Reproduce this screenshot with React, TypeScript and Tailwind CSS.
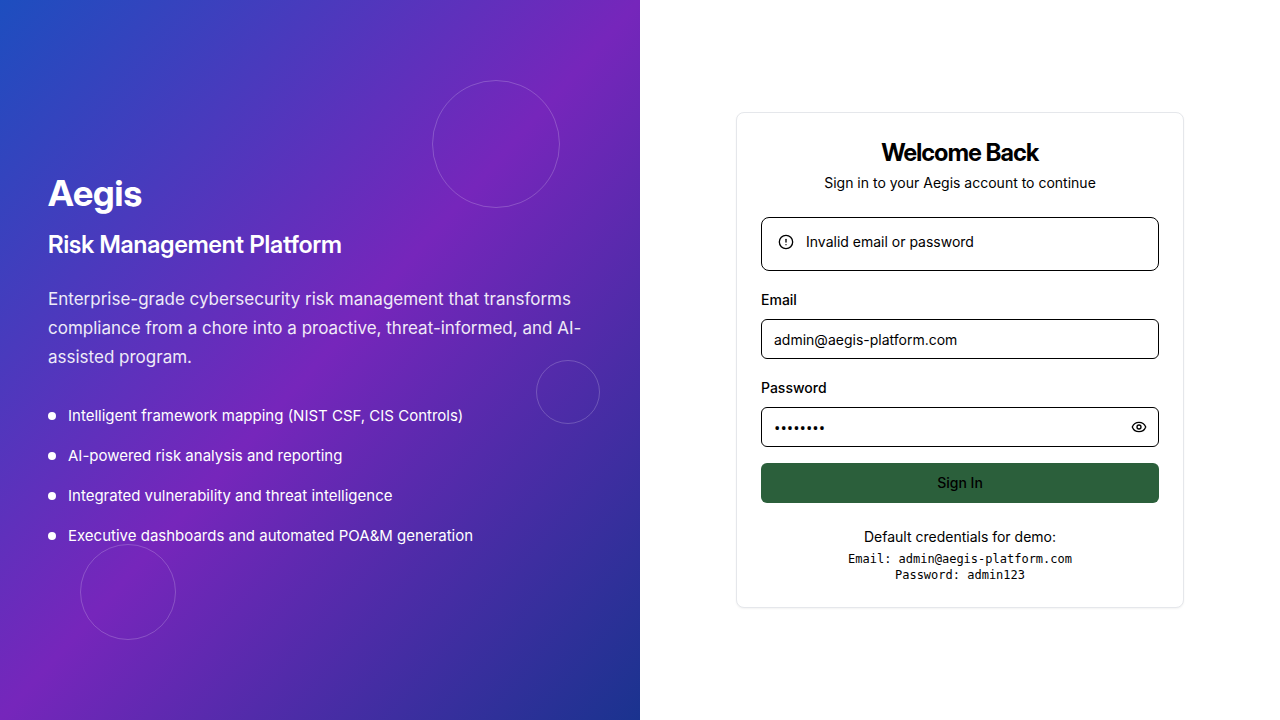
import { useState } from "react";
import { CircleAlert, Eye } from "lucide-react";

const features = [
  "Intelligent framework mapping (NIST CSF, CIS Controls)",
  "AI-powered risk analysis and reporting",
  "Integrated vulnerability and threat intelligence",
  "Executive dashboards and automated POA&M generation",
];

export default function App() {
  const [email, setEmail] = useState("admin@aegis-platform.com");
  const [password, setPassword] = useState("admin123");
  const [visible, setVisible] = useState(false);

  return (
    <div className="flex min-h-screen bg-white font-['Inter',sans-serif] text-black">
      <section className="relative flex w-1/2 flex-col justify-center overflow-hidden bg-linear-to-br/srgb from-[#1d4ebf] via-[#7626bb] to-[#1a338f] px-12 text-white">
        <h1 className="mb-4 font-['Inter_Display','Inter',sans-serif] text-4xl font-bold">Aegis</h1>
        <h2 className="mb-6 font-['Inter_Display','Inter',sans-serif] text-2xl font-semibold">Risk Management Platform</h2>
        <p className="mb-8 text-[17px] leading-[29px] opacity-90">
          Enterprise-grade cybersecurity risk management that transforms compliance from a chore into a proactive, threat-informed, and AI-assisted program.
        </p>
        <ul className="space-y-4">
          {features.map((feature) => (
            <li key={feature} className="flex items-center gap-3 text-[15px] leading-6">
              <span className="size-2 rounded-full bg-white" />
              <span>{feature}</span>
            </li>
          ))}
        </ul>
        <div className="absolute top-20 right-20 size-32 rounded-full border border-white/20" />
        <div className="absolute bottom-20 left-20 size-24 rounded-full border border-white/20" />
        <div className="absolute top-1/2 right-10 size-16 rounded-full border border-white/20" />
      </section>
      <main className="flex w-1/2 items-center justify-center p-8">
        <div className="w-full max-w-md rounded-lg border border-[#e5e7eb] bg-white p-6 shadow-xs">
          <div className="mb-6 space-y-1 text-center">
            <h2 className="font-['Inter_Display','Inter',sans-serif] text-2xl font-bold tracking-tight">Welcome Back</h2>
            <p className="text-sm">Sign in to your Aegis account to continue</p>
          </div>
          <form className="space-y-4" onSubmit={(e) => e.preventDefault()}>
            <div role="alert" className="flex gap-3 rounded-lg border border-black px-4 pt-4 pb-5">
              <CircleAlert className="size-4" />
              <p className="text-sm leading-4">Invalid email or password</p>
            </div>
            <div>
              <label htmlFor="email" className="mb-1.5 block text-sm leading-[26px] font-medium">Email</label>
              <input id="email" type="email" value={email} onChange={(e) => setEmail(e.target.value)} className="block h-10 w-full rounded-md border border-black px-3 text-sm" />
            </div>
            <div>
              <label htmlFor="password" className="mb-1.5 block text-sm leading-[26px] font-medium">Password</label>
              <div className="relative">
                <input id="password" type={visible ? "text" : "password"} value={password} onChange={(e) => setPassword(e.target.value)} className="block h-10 w-full rounded-md border border-black px-3 pr-10 font-['Open_Sans',sans-serif] text-[17px]" />
                <button type="button" aria-label="Show password" onClick={() => setVisible(!visible)} className="absolute inset-y-0 right-0 px-3">
                  <Eye className="size-4" />
                </button>
              </div>
            </div>
            <button type="submit" className="h-10 w-full rounded-md bg-[#2b5f3b] text-sm font-medium">Sign In</button>
          </form>
          <div className="mt-6 space-y-1 text-center">
            <p className="text-sm">Default credentials for demo:</p>
            <p className="font-['DejaVu_Sans_Mono',monospace] text-xs">Email: admin@aegis-platform.com<br />Password: admin123</p>
          </div>
        </div>
      </main>
    </div>
  );
}
